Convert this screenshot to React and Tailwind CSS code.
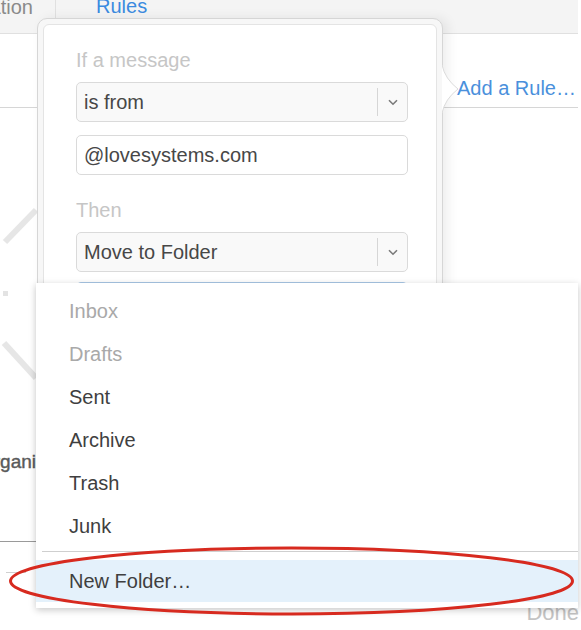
import React from 'react';

const font = "font-['Liberation_Sans',Arial,sans-serif]";

function Chevron() {
    return (
        <svg width="10" height="7" viewBox="0 0 10 7">
            <path d="M1 1.2 L5 5.2 L9 1.2" fill="none" stroke="#7a7a7a" strokeWidth="1.6" />
        </svg>
    );
}

function SelectField({ value }) {
    return (
        <div className="flex h-[40px] items-center rounded-[5px] border border-[#dadada] bg-[#f9f9f9] pl-[7px]">
            <span className="flex-1 text-[20px] leading-[24px] text-[#474747]">{value}</span>
            <div className="flex h-[28px] w-[30px] items-center justify-center border-l border-[#d6d6d6]">
                <Chevron />
            </div>
        </div>
    );
}

function RulePopover() {
    return (
        <div className="absolute left-[37px] top-[18px] h-[580px] w-[406px] rounded-[10px] border border-[#d6d6d6] bg-[#f7f7f7] p-[5px] shadow-[5px_0_12px_rgba(0,0,0,0.07)]">
            <div className="h-full rounded-[6px] border border-[#e4e4e4] bg-white pl-[32px] pr-[28px] pt-[23px]">
                <div className="mb-[10px] text-[20px] leading-[24px] text-[#c6c6c6]">If a message</div>
                <SelectField value="is from" />
                <div className="mt-[13px] flex h-[40px] items-center rounded-[5px] border border-[#dadada] bg-white pl-[7px] text-[20px] leading-[24px] text-[#474747]">
                    @lovesystems.com
                </div>
                <div className="mb-[10px] mt-[23px] text-[20px] leading-[24px] text-[#c6c6c6]">Then</div>
                <SelectField value="Move to Folder" />
                <div className="mt-[10px] h-[40px] rounded-[5px] border border-[#a9c7e6] bg-white" />
            </div>
            <svg className="absolute left-[404px] top-[46px]" width="18" height="48" viewBox="0 0 18 48">
                <path d="M0 0 Q3 14 16 24 Q3 34 0 48 Z" fill="white" />
                <path d="M0 0 Q3 14 16 24 Q3 34 0 48" fill="none" stroke="#dcdcdc" strokeWidth="1" />
            </svg>
        </div>
    );
}

const folders = [
    { name: 'Inbox', muted: true },
    { name: 'Drafts', muted: true },
    { name: 'Sent' },
    { name: 'Archive' },
    { name: 'Trash' },
    { name: 'Junk' },
];

function FolderMenu() {
    return (
        <div className="absolute left-[36px] top-[283px] w-[542px] bg-white py-[6px] shadow-[0_2px_7px_rgba(0,0,0,0.22)]">
            {folders.map((f) => (
                <div
                    key={f.name}
                    className={
                        'flex h-[43px] items-center pl-[33px] text-[20px] leading-[24px] ' +
                        (f.muted ? 'text-[#a9a9a9]' : 'text-[#3f3f3f]')
                    }
                >
                    {f.name}
                </div>
            ))}
            <div className="ml-[6px] mt-[4px] border-t border-[#cfcfcf]" />
            <div className="mt-[8px] flex h-[42px] items-center bg-[#e4f1fb] pl-[33px] text-[20px] leading-[24px] text-[#3f3f3f]">
                New Folder…
            </div>
        </div>
    );
}

export default function App() {
    return (
        <div className={'relative h-[630px] w-[581px] overflow-hidden bg-white ' + font}>
            {/* page behind the popover */}
            <div className="flex h-[34px] w-[578px] border-b border-[#e0e0e0] bg-[#f4f4f4]">
                <div className="flex w-[56px] justify-end overflow-hidden border-r border-[#e0e0e0] pr-[22px]">
                    <span className="-mt-[2px] whitespace-nowrap text-[20px] leading-[18px] text-[#8a8a8a]">Organization</span>
                </div>
                <span className="-mt-[3px] ml-[40px] text-[20px] leading-[18px] text-[#3b8be0]">Rules</span>
            </div>
            <div className="flex h-[74px] w-[578px] items-end justify-end border-b border-[#d6d6d6] pb-[7px] pr-[2px]">
                <span className="text-[20px] leading-[24px] text-[#4a90dc]">Add a Rule…</span>
            </div>
            <div className="flex h-[521px]">
                <div className="flex w-[40px] flex-col">
                    <svg className="mt-[95px]" width="40" height="180" viewBox="0 0 40 180">
                        <path d="M5 39 L36 7" stroke="#e6e6e6" strokeWidth="6" />
                        <rect x="3" y="88" width="5" height="5" fill="#e3e3e3" />
                        <path d="M4 140 L36 175" stroke="#e6e6e6" strokeWidth="6" />
                    </svg>
                    <span className="-ml-[21px] mt-[67px] whitespace-nowrap text-[19px] leading-[24px] text-[#5a5a5a] [-webkit-text-stroke:0.4px_#5a5a5a]">Organize</span>
                    <div className="mt-[67px] border-t border-[#9a9a9a]" />
                    <div className="ml-[6px] mt-[30px] w-[20px] border-t border-[#d0d0d0]" />
                </div>
                <div className="flex flex-1 flex-col items-end justify-end pb-[4px] pr-[2px]">
                    <span className="text-[22px] leading-[24px] text-[#c4c4c4]">Done</span>
                </div>
            </div>

            <RulePopover />
            <FolderMenu />

            <svg className="pointer-events-none absolute left-0 top-0" width="581" height="630" viewBox="0 0 581 630">
                <ellipse cx="291.5" cy="581" rx="281" ry="33" fill="none" stroke="#d72a1f" strokeWidth="3" />
            </svg>
        </div>
    );
}
